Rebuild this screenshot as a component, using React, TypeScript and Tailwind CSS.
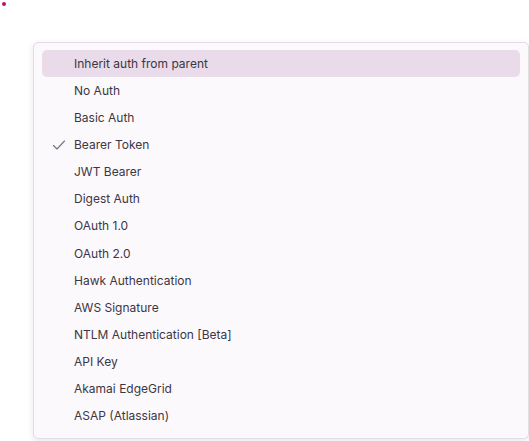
import React from 'react';

const AUTH_TYPES = [
  'Inherit auth from parent',
  'No Auth',
  'Basic Auth',
  'Bearer Token',
  'JWT Bearer',
  'Digest Auth',
  'OAuth 1.0',
  'OAuth 2.0',
  'Hawk Authentication',
  'AWS Signature',
  'NTLM Authentication [Beta]',
  'API Key',
  'Akamai EdgeGrid',
  'ASAP (Atlassian)',
];

const Check = () => (
  <svg width="14" height="14" viewBox="0 0 14 14" fill="none" className="text-[#7a6d80]">
    <path d="M1.5 7.5 L5 11 L12.5 3" stroke="currentColor" strokeWidth="1.1" strokeLinecap="round" strokeLinejoin="round" />
  </svg>
);

export default function App() {
  const selected = 'Bearer Token';
  const active = 'Inherit auth from parent';

  return (
    <div className="relative w-[529px] h-[441px] bg-white overflow-hidden" style={{ fontFamily: 'Inter, "Noto Sans", sans-serif' }}>
      <div className="absolute left-[2px] top-[2px] w-[4px] h-[4px] rounded-full bg-[#b3107a]" />
      <div className="pt-[42px] pl-[33px]">
        <div className="w-[496px] h-[397px] bg-[#fcf9fc] border border-[#e4dbe4] rounded-[5px] shadow-[0_2px_6px_rgba(80,40,80,0.12)] px-[8px] py-[7px]">
          {AUTH_TYPES.map(name => (
            <div
              key={name}
              className={`h-[27.15px] flex items-center rounded-[5px] text-[12px] text-[#3d3643] ${name === active ? 'bg-[#e9dbe9]' : ''}`}
            >
              <div className="w-[32px] flex items-center pl-[10px]">
                {name === selected && <Check />}
              </div>
              <span>{name}</span>
            </div>
          ))}
        </div>
      </div>
    </div>
  );
}
